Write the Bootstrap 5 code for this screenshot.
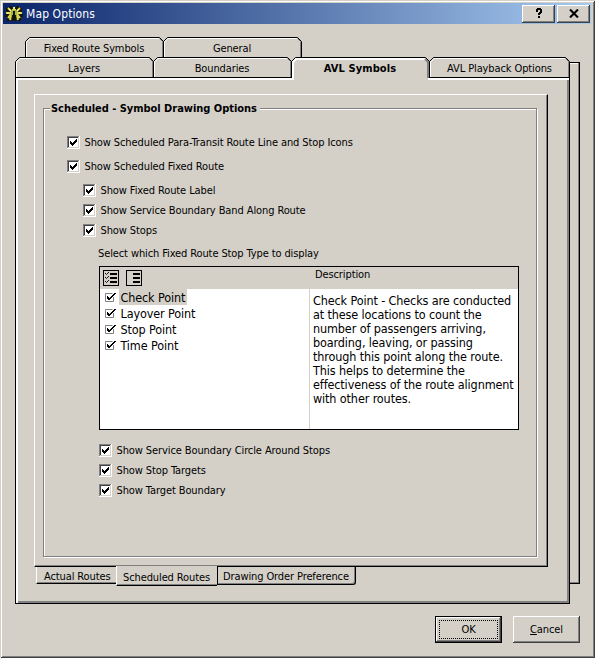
<!DOCTYPE html>
<html lang="en">
<head>
<meta charset="utf-8">
<meta name="viewport" content="width=device-width, initial-scale=1">
<title>Map Options</title>
<link href="https://cdn.jsdelivr.net/npm/bootstrap@5.3.0/dist/css/bootstrap.min.css" rel="stylesheet">
<style>
:root{--face:#d4d0c8;--shade:#808080}
body{font-family:"DejaVu Sans Condensed","DejaVu Sans",sans-serif;font-stretch:condensed;font-size:11px;line-height:14px;letter-spacing:-.11px;color:#000;background:var(--face)}
.dialog-window{width:595px;height:658px;padding:3px 4px 4px 3px;background:var(--face);box-shadow:inset 1px 1px var(--face),inset -1px -1px #404040,inset 2px 2px #fff,inset -2px -2px var(--shade)}
.title-strip{height:21px;padding:0 1px 0 2px;background:linear-gradient(90deg,#0a246a,#a6caf0);color:#fff;font-size:12px;letter-spacing:.1px}
.title-text{margin-left:3px}
.bevel{background:var(--face);border:0;padding:0;color:#000;letter-spacing:inherit;box-shadow:inset -1px -1px #404040,inset 1px 1px #fff,inset -2px -2px var(--shade)}
.cap-btns{gap:2px}
.cap-btn{width:33px;height:18px}
.tabs-area{padding:13px 11px 0 12px}
.tab-row{height:20px}
.tab-row.back-row{margin-left:10px}
.page-tab{width:138px;height:20px;position:relative;border:0;background:none;padding:2px 0 0;color:#000;letter-spacing:inherit;line-height:14px}
.page-tab.last-tab{width:141px}
.page-tab svg{position:absolute;left:0;top:0;overflow:visible}
.page-tab span{position:relative;top:1px}
.active-tab{font-weight:700;letter-spacing:.08px;z-index:2}
.sheet-wrap{width:565px}
.main-sheet{width:555px;height:527px;border:1px solid #000;box-shadow:inset 2px 2px #fff,inset -2px -2px var(--shade);padding:16px 0 0 18px}
.back-sheet{width:10px;height:522px;margin-top:-15px;border:1px solid #000;border-left:0;box-shadow:inset -1px -1px var(--shade),inset 0 1px #fff}
.sub-sheet{width:514px;height:473px;border-left:1px solid #fff;border-top:1px solid #fff;border-right:1px solid #000;border-bottom:1px solid #000;box-shadow:inset -1px -1px var(--shade);padding:13px 10px 8px 8px}
.group-frame{height:449px;border:1px solid var(--shade);box-shadow:1px 1px #fff,inset 1px 1px #fff;padding:0 0 0 23px}
.group-title{font-weight:700;height:14px;letter-spacing:-.03px;margin:-7px 0 19px -17px;padding:0 3px 0 1px;background:var(--face);width:max-content}
.check-row{height:14px;gap:4.500px;margin-bottom:6px;letter-spacing:-.1px}
.check-row.roomy{margin-bottom:10px}
.check-row svg{flex:none}
.check-row span{padding-top:1px}
.lv1{margin-left:16px}.lv2{margin-left:32px}
.list-label{margin:10px 0 0 31px}
.stop-list{width:420px;height:164px;margin:5px 0 13px 32px;border:1px solid #000;background:#fff}
.list-head{height:22px;background:var(--face);padding:2px 0 0 3px}
.head-gap{margin-left:7px}
.desc-title{margin:-1px 0 0 173px}
.list-body{font-size:12.5px;letter-spacing:-.12px}
.stop-col{width:210px;border-right:1px solid #d4d0c8}
.stop-item{height:16px;line-height:16px;padding-left:5px;gap:2px}
.stop-name{padding:1px 2px 0 1.500px;height:16px;line-height:16px}
.stop-name.picked{background:var(--face)}
.desc-col{padding:5px 0 0 3px;line-height:14px;white-space:nowrap}
.low-tabs{margin-left:2px}
.low-tab{height:17px;border:solid #000;border-width:0 0 1px 0;border-left:1px solid #fff;box-shadow:inset 0 -1px var(--shade);padding:3px 0 0 7px;line-height:13px;white-space:nowrap}
.low-a{width:80px}
.low-b{width:101px;height:20px;margin-top:-1px;background:var(--face);padding-top:5px;padding-left:6px}
.low-c{width:139px;height:18px;border:1px solid #000;border-top:0;border-radius:0 0 3px 0;box-shadow:inset -1px -1px var(--shade);padding-left:5px}
.cmd-row{padding-top:12px;gap:11px}
.cmd-btn{width:67px;height:27px}
.default-btn{border:1px solid #000}
.focus-dots{width:59px;height:19px;border:1px dotted #000}
</style>
<script src="https://cdn.jsdelivr.net/npm/bootstrap@5.3.0/dist/js/bootstrap.bundle.min.js"></script>
</head>
<body class="overflow-hidden">
<svg width="0" height="0" class="position-absolute" aria-hidden="true">
<defs>
<symbol id="tick-box" viewBox="0 0 13 13"><path fill="#fff" d="M0 0h13v13H0z"/><path fill="#808080" d="M0 0h12v1H1v11H0z"/><path fill="#404040" d="M1 1h10v1H2v9H1z"/><path fill="#d4d0c8" d="M11 1h1v11H1v-1h10z"/><path d="M3 5h1v1h1v1h1v-1h1v-1h1v-1h1v-1h1v3h-1v1h-1v1h-1v1h-1v1h-1v-1h-1v-1h-1z"/></symbol>
<symbol id="mini-tick" viewBox="0 0 12 10"><path fill="none" stroke="#808080" d="M7.500 1.500h-7v8h8V5"/><path d="M2 4h1v1h1v1h1v-1h1v-1h1v-1h1v-1h1V1h2v1h-1v1h-1v1h-1v1h-1v1h-1v1h-1v1h-2v-1h-1V6H2z"/></symbol>
</defs></svg>
<main class="dialog-window d-flex flex-column">
<header class="title-strip d-flex align-items-center">
<svg width="18" height="17" viewBox="0 0 18 17"><path fill="#181804" shape-rendering="crispEdges" d="M4 1h3v2h4V1h3v2h3v4h-1v2h2v3h-2v4h-4v-2h-1v2H7v-2H6v2H2v-4H0V9h2V7H1V3h3z"/><path stroke="#d8d850" stroke-width="2" fill="none" d="M9 2v4M3 3l4 4M15 3l-4 4M1 8h5M12 8h5M3 13l3-4M15 13l-3-4M7 5h4M6 10l-1 5M12 10l1 5"/><path stroke="#fbfbc0" fill="none" d="M9 2v2M4 4l2 2M14 4l-2 2M2 8h2M14 8h2"/><path fill="#a9b83c" d="M6 5h6v5H6z"/><path fill="#111" d="M8 6h2v9H8z"/></svg>
<span class="title-text">Map Options</span>
<div class="cap-btns ms-auto d-flex">
<button class="bevel cap-btn d-flex align-items-center justify-content-center" aria-label="Help"><svg width="8" height="11" viewBox="0 0 8 11" shape-rendering="crispEdges"><path d="M2 0h4v1h1v4H6v1H5v1H3V5h1V4h1V2H3v2H1V1h1zM3 8h2v2H3z"/></svg></button>
<button class="bevel cap-btn d-flex align-items-center justify-content-center" aria-label="Close"><svg width="10" height="9" viewBox="0 0 10 9"><path fill="none" stroke="#000" stroke-width="2.100" d="M1 .5l8 8M9 .5l-8 8"/></svg></button>
</div>
</header>
<section class="tabs-area">
<nav class="tab-row back-row d-flex">
<button class="page-tab"><svg width="139" height="20" fill="none"><path stroke="#fff" d="M1.500 20V5l3.500-3.500h129"/><path stroke="#808080" d="M134.500 1.500l3 3V20"/><path stroke="#000" d="M.5 20V4.500l4-4h130l4 4V20"/></svg><span>Fixed Route Symbols</span></button>
<button class="page-tab"><svg width="139" height="20" fill="none"><path stroke="#fff" d="M1.500 20V5l3.500-3.500h129"/><path stroke="#808080" d="M134.500 1.500l3 3V20"/><path stroke="#000" d="M.5 20V4.500l4-4h130l4 4V20"/></svg><span>General</span></button>
</nav>
<nav class="tab-row d-flex">
<button class="page-tab"><svg width="139" height="20" fill="none"><path stroke="#fff" d="M1.500 20V5l3.500-3.500h129"/><path stroke="#808080" d="M134.500 1.500l3 3V20"/><path stroke="#000" d="M.5 20V4.500l4-4h130l4 4V20"/></svg><span>Layers</span></button>
<button class="page-tab"><svg width="139" height="20" fill="none"><path stroke="#fff" d="M1.500 20V5l3.500-3.500h129"/><path stroke="#808080" d="M134.500 1.500l3 3V20"/><path stroke="#000" d="M.5 20V4.500l4-4h130l4 4V20"/></svg><span>Boundaries</span></button>
<button class="page-tab active-tab"><svg width="139" height="23" fill="none"><path fill="#d4d0c8" d="M1 19h136v4H1z"/><path stroke="#fff" stroke-width="2" d="M2 23V5l3-3h129"/><path stroke="#808080" stroke-width="2" d="M134 2l3 3v16"/><path stroke="#000" d="M.5 21V4.500l4-4h130l4 4V21"/></svg><span>AVL Symbols</span></button>
<button class="page-tab last-tab"><svg width="141" height="20" fill="none"><path stroke="#fff" d="M1.500 20V5l3.500-3.500h131"/><path stroke="#808080" d="M136.500 1.500l3 3V20"/><path stroke="#000" d="M.5 20V4.500l4-4h132l4 4V20"/></svg><span>AVL Playback Options</span></button>
</nav>
<div class="sheet-wrap d-flex">
<div class="main-sheet">
<div class="sub-sheet">
<div class="group-frame">
<div class="group-title">Scheduled - Symbol Drawing Options</div>
<div class="check-row roomy d-flex align-items-center"><svg width="13" height="13"><use href="#tick-box"/></svg><span>Show Scheduled Para-Transit Route Line and Stop Icons</span></div>
<div class="check-row roomy d-flex align-items-center"><svg width="13" height="13"><use href="#tick-box"/></svg><span>Show Scheduled Fixed Route</span></div>
<div class="check-row lv1 d-flex align-items-center"><svg width="13" height="13"><use href="#tick-box"/></svg><span>Show Fixed Route Label</span></div>
<div class="check-row lv1 d-flex align-items-center"><svg width="13" height="13"><use href="#tick-box"/></svg><span>Show Service Boundary Band Along Route</span></div>
<div class="check-row lv1 d-flex align-items-center"><svg width="13" height="13"><use href="#tick-box"/></svg><span>Show Stops</span></div>
<div class="list-label">Select which Fixed Route Stop Type to display</div>
<div class="stop-list d-flex flex-column">
<div class="list-head d-flex">
<svg width="16" height="17" shape-rendering="crispEdges"><path fill="none" stroke="#000" d="M.5 1.500h15v15H.5z"/><path d="M7 4h7v2H7zM7 8h7v2H7zM7 12h7v2H7z"/><path fill="none" stroke="#000" stroke-width=".9" shape-rendering="auto" d="M2 4l1.500 1.500L6 3M2 8l1.500 1.500L6 7M2 12l1.500 1.500L6 11"/></svg>
<svg class="head-gap" width="16" height="17" shape-rendering="crispEdges"><path fill="none" stroke="#000" d="M.5 1.500h15v15H.5z"/><path d="M7 4h7v2H7zM7 8h7v2H7zM7 12h7v2H7z"/></svg>
<span class="desc-title">Description</span>
</div>
<div class="list-body d-flex flex-grow-1">
<div class="stop-col">
<div class="stop-item d-flex align-items-center"><svg width="12" height="10"><use href="#mini-tick"/></svg><span class="stop-name picked">Check Point</span></div>
<div class="stop-item d-flex align-items-center"><svg width="12" height="10"><use href="#mini-tick"/></svg><span class="stop-name">Layover Point</span></div>
<div class="stop-item d-flex align-items-center"><svg width="12" height="10"><use href="#mini-tick"/></svg><span class="stop-name">Stop Point</span></div>
<div class="stop-item d-flex align-items-center"><svg width="12" height="10"><use href="#mini-tick"/></svg><span class="stop-name">Time Point</span></div>
</div>
<div class="desc-col">Check Point - Checks are conducted<br>at these locations to count the<br>number of passengers arriving,<br>boarding, leaving, or passing<br>through this point along the route.<br>This helps to determine the<br>effectiveness of the route alignment<br>with other routes.</div>
</div>
</div>
<div class="check-row lv2 d-flex align-items-center"><svg width="13" height="13"><use href="#tick-box"/></svg><span>Show Service Boundary Circle Around Stops</span></div>
<div class="check-row lv2 d-flex align-items-center"><svg width="13" height="13"><use href="#tick-box"/></svg><span>Show Stop Targets</span></div>
<div class="check-row lv2 d-flex align-items-center"><svg width="13" height="13"><use href="#tick-box"/></svg><span>Show Target Boundary</span></div>
</div>
</div>
<div class="low-tabs d-flex align-items-start">
<div class="low-tab low-a">Actual Routes</div>
<div class="low-tab low-b">Scheduled Routes</div>
<div class="low-tab low-c">Drawing Order Preference</div>
</div>
</div>
<div class="back-sheet"></div>
</div>
<div class="cmd-row d-flex justify-content-end">
<button class="bevel cmd-btn default-btn d-flex align-items-center justify-content-center"><span class="focus-dots d-flex align-items-center justify-content-center">OK</span></button>
<button class="bevel cmd-btn"><u>C</u>ancel</button>
</div>
</section>
</main>
</body>
</html>
